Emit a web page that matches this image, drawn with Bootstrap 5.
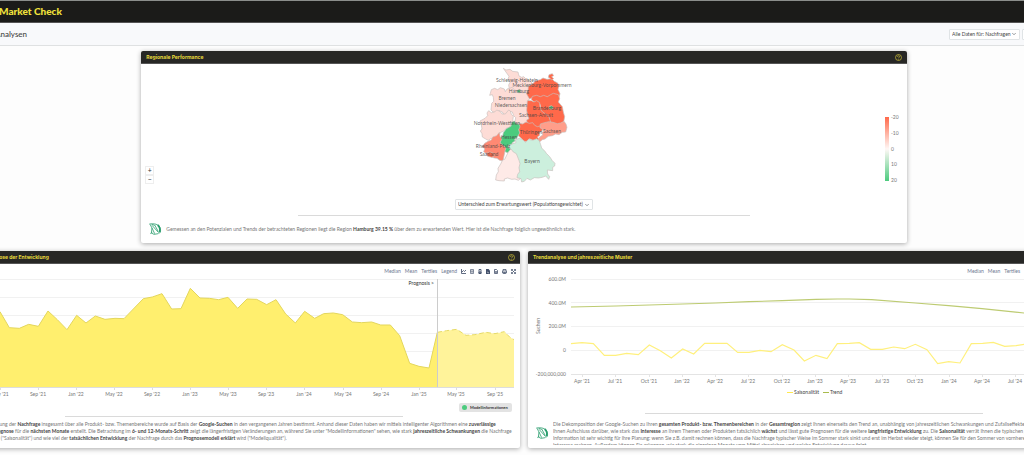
<!DOCTYPE html>
<html lang="de">
<head>
<meta charset="utf-8">
<meta name="viewport" content="width=device-width, initial-scale=1">
<title>Market Check</title>
<link href="https://cdn.jsdelivr.net/npm/bootstrap@5.3.0/dist/css/bootstrap.min.css" rel="stylesheet">
<style>
body{font-family:Lato,"Open Sans",sans-serif;font-size:5px;line-height:7px;color:#777;background:#fdfdfd}
.sheet{margin-left:-52px;margin-right:-76px}
.topbar{background:#1b1b19;border-top:1px solid #8b8e8b;border-bottom:1px solid #555;height:23px;padding-left:51px;box-shadow:0 1px 2px #0004}
.topbar h1{font:900 10px/20px Lato,sans-serif;color:#f1e23c}
.subbar{background:#f8f9fb;height:23px;border-bottom:1px solid #dfe1e2;padding-left:47px;padding-right:24px;gap:2px}
.subbar h2{font:500 8px/20px Lato,sans-serif;color:#444}
.tiny-select{font-size:5px;line-height:7px;color:#444;border:1px solid #e0e4e6;border-radius:1px;padding:1px 7px 1px 2px;background-size:4px 4px;background-position:right 3px center;width:auto;min-height:0}
.filter-a{width:71px}.filter-b{width:54px}.measure{width:138px}
.panel{background:#fff;border-radius:2px;box-shadow:0 1px 5px #0005;overflow:hidden}
.panel-title{background:#272725;border-bottom:1px solid #555;height:13px;padding:0 5px}
.panel-title h3{font:700 5px/12px Inter,sans-serif;color:#e8da3c}
.help{border:0;background:none;padding:0;line-height:0}
.rule{width:59%;height:1px;background:#dadada;margin:0 auto}
.board-row{margin:0 -4px}
.board-row-top{margin-top:1px;margin-bottom:8px}
.mapgrid{display:grid;grid-template-columns:1fr auto 1fr;height:126px}
.zoomer{width:9px;padding-bottom:6px}
.zoomer button{border:1px solid #eee;background:#fff;color:#333;font-size:7px;line-height:7px;height:9px;padding:0}
.picker{padding:9px 0 5px}
.note-top{padding:7px 8px 8px}
.tools{height:14px;padding:0 4px;gap:4px;color:#6e7891}
.tools-b{padding-right:60px}
.tools a{color:inherit;text-decoration:none}
.tools .ico{line-height:0;color:#44516b}
.info{border:0;border-radius:2px;background:#e3e3e3;color:#333;font-size:5px;line-height:9px;padding:0 3px;width:53px;white-space:nowrap;gap:3px}
.info b{font-size:4px}
.dot{width:5px;height:5px;border-radius:50%;background:#4ccb7e;flex:none}
.note b{color:#444}
.note p{white-space:nowrap}
.note-a{padding:4px 0 6px 24px}
.note-b{height:24px;overflow:hidden}
.rule-b{margin-top:17px;margin-bottom:3px}
.chart{overflow:visible}
svg text{font-size:5px;fill:#777}
svg .maplabel{fill:#444;fill-opacity:.85;text-anchor:middle;font-size:5px}
.land path{stroke:#c9c0bd;stroke-width:2;stroke-linejoin:round}
</style>
</head>
<body>
<svg width="0" height="0" class="position-absolute" aria-hidden="true">
<symbol id="q" viewBox="0 0 14 14"><g fill="none" stroke="#d8ca3a" stroke-width="1.3"><circle cx="7" cy="7" r="6"/><path d="M4.8 5.5c.2-2.6 4.6-2.4 4.3.1C9 7 7 7 7 8.5M7 9.8v1.4"/></g></symbol>
<symbol id="leaf" viewBox="0 0 39 36"><g fill="none" stroke="#2a9d6d" stroke-width="2.4"><path d="M1 3C12 2 20 2 26 6c8 5 10 13 8 22l-5 3"/><path d="M26 6c7 6 8 13 6 21" stroke-width="5"/><path d="M3 4l6 11-2 15 8 4 13-2M9 15l8 17M9 7l20 22M17 6l11 20M4 32l6-4M8 4l9 3"/></g></symbol>
</svg>
<div class="overflow-hidden pb-2">
<div class="sheet">
<header class="topbar"><h1 class="m-0">Market Check</h1></header>
<div class="subbar d-flex align-items-center">
<h2 class="m-0 me-auto">Analysen</h2>
<select class="form-select tiny-select filter-a" aria-label="Daten"><option>Alle Daten für: Nachfragen</option></select>
<select class="form-select tiny-select filter-b" aria-label="Region"><option>Alle Regionen</option></select>
</div>
<main class="pt-1">
<div class="row gx-2 board-row board-row-top justify-content-center">
<div class="col-8">
<section class="panel">
<div class="panel-title d-flex align-items-center justify-content-between"><h3 class="m-0">Regionale Performance</h3><button class="help" aria-label="Hilfe"><svg width="7" height="7"><use href="#q"/></svg></button></div>
<div class="mapgrid">
<div class="zoomer d-flex flex-column justify-content-end ms-1"><button aria-label="Vergrößern">+</button><button aria-label="Verkleinern">−</button></div>
<svg width="150" height="126" viewBox="450 64 150 126">
<g class="land" transform="translate(450 60) scale(.33333)">
<path fill="#fddcd6" d="M163 25l8 5 12-2 8 6 16 2 3 12 8 4 6-2 8 8 10 4 8 8-4 12-8 10 4 12-10 7-14-3-10-2-9-7-11-2-7-10-2-12 4-8-6-10 3-8z"/>
<path fill="#fddcd6" d="M127 89l10-4 9 4 8-6 12 4 3 8 5-8 8-2 7-3 8 8 9 3 14 5 12 0 12 14-5 8 0 20-3 9-2 11 6 10-3 12-5 8-10 3-10-3-5 3-9-8 2-12-6-6-4-11-5-2-10 12-10-2-5-8-10-4-8 6-10-2-6-6 2-20 6-6-1-12-3-8-8 2 2-6z"/>
<path fill="#fddcd6" d="M119 152l8 6 10-2 6-6 10 4 6 8 10 0 10-12 5 3 3 10 6 6-2 14-7 18-12 4-8 8-10 5-4 9-8 6-8 4-8-2-8 6-8-4-10-6-1-10-5-8 5-6-2-12-4-12 15-8 8-8-2-8z"/>
<path fill="#ff694a" d="M238 78l12-6 11-10 13-3 8-5 12 4 14-2 8 8 10 5 4 9-3 10 6 13-3 12-14-5-9 5-13-2-9 6-10-2-13 4-13-5-8 2-8-14 4-10z"/><path fill="#ff694a" d="M300 44l10-3 4 6-6 3 6 6-6 4-6-6-4-2z"/>
<path fill="#ff694a" d="M250 109l13-3 11 4 10-4 11 4 10-6 8-4 15 4 4 12-4 10 12 14 3 16 4 14-3 16-11 9-12-1-14-3-8-13-11-11-12-9-2-24-9-8-10 0-8-8z"/>
<path fill="#ff694a" d="M235 122l12 0 8 4 8-4 9 6 1 12 3 11 9 8 14 9 6 18-9 7-12 3-7 8-2 7-8 2-7-9-12-2-5-8-8-2-2-12 7-4-5-15-2-10z"/>
<path fill="#ff694a" d="M211 190l10 2 10-6 10 4 10-2 6 8 8 4 8-2 10 6-4 9-8 5 1 8-7 5 6 7-10 5-10-3-10-4-8 9-9-2-7-8-9-8 2-12-2-12z"/>
<path fill="#ff9e8a" d="M274 192l12-4 14-3 12 2 13 4 10-2 10-5 6 8 3 10-4 14-10 1-10 7-10-2-10 5-12 2-10 8-8 2-10 8-3-8 4-7 10-7-2-8 8-6-8-4-6-4z"/>
<path fill="#4ccb7e" d="M188 187l8-4 5 8 10 2 2 8-4 8 3 10-8 14-7 4 1 6-9 6 3 10-6 5 1 12-12 2-9-4 3-8-6-4-12-8 4-11-2-8 8-7 2-10 9-12 14-7z"/>
<path fill="#ff8973" d="M151 217l2 12 6 8-6 11 12 10 6 6-3 9-6 30-10-2-8-6-8-1-10-4-6-3-8-6-8-6 3-8-6-8 6-9 10-6 10-4 4-9 12-4z"/>
<path fill="#ff694a" d="M112 279l12-3 10 4 2 8-8 4-12-3z"/>
<path fill="#feeae7" d="M178 276l8-10 10 2 6 9 10 4 3 12 5 10-2 8 4 8-8 12-2 12 3 12-7 6-10-4-10 1-12-4-10 3 0 6-16-1-10-2 2-15 6-10-1-10 8-13 6-12 6-2 5-10z"/>
<path fill="#ccefdd" d="M189 252l12-4-2-9 12-4 10 4 8 8 10-9 12 3 12-5 8 6 4 12 3 10 10 10 4 6 10 10 8 12 8 8-1 8-6 4 0 10-16-2 1 12 6 8-3 8-9-10-10 4-12 2-12-1-12 7-10-5-8 9-8 2-2-10-12-3 2-10 6-8-2-12 3-12-3-10-4-10-4-10-9-5-7-9-9-5 2-6z"/>
<path fill="#4ccb7e" d="M204 92l6-4 5 5-3 6-7-2zM300 140l7-3 6 5-4 6-8-2z"/>
</g>
<g><text class="maplabel" x="518" y="82">Schleswig-Holstein</text><text class="maplabel" x="543" y="87">Mecklenburg-Vorpommern</text><text class="maplabel" x="520" y="93">Hamburg</text><text class="maplabel" x="508" y="100">Bremen</text><text class="maplabel" x="512" y="107">Niedersachsen</text><text class="maplabel" x="548" y="110">Brandenburg</text><text class="maplabel" x="537" y="117">Sachsen-Anhalt</text><text class="maplabel" x="498" y="125">Nordrhein-Westfalen</text><text class="maplabel" x="532" y="134">Thüringen</text><text class="maplabel" x="553" y="133">Sachsen</text><text class="maplabel" x="510" y="139">Hessen</text><text class="maplabel" x="494" y="148">Rheinland-Pfalz</text><text class="maplabel" x="490" y="156">Saarland</text><text class="maplabel" x="533" y="163">Bayern</text></g>
</svg>
<svg class="ms-auto" width="23" height="126" viewBox="884 64 23 126"><defs><linearGradient id="scale" x2="0" y2="1"><stop stop-color="#ff694a"/><stop offset=".5" stop-color="#fff8f6"/><stop offset="1" stop-color="#4ccb7e"/></linearGradient></defs><path fill="url(#scale)" d="M885 117h4v64h-4z"/><text x="891" y="119">-20</text><text x="891" y="135">-10</text><text x="891" y="151">0</text><text x="891" y="166">10</text><text x="891" y="182">20</text></svg>
</div>
<div class="picker d-flex justify-content-center"><select class="form-select tiny-select measure" aria-label="Kennzahl"><option>Unterschied zum Erwartungswert (Populationsgewichtet)</option></select></div>
<div class="rule"></div>
<div class="note note-top d-flex align-items-center"><svg width="13" height="12"><use href="#leaf"/></svg><p class="m-0 ms-1">Gemessen an den Potenzialen und Trends der betrachteten Regionen liegt die Region <b>Hamburg 39.15 %</b> über dem zu erwartenden Wert. Hier ist die Nachfrage folglich ungewöhnlich stark.</p></div>
</section>
</div>
</div>
<div class="row gx-2 board-row">
<div class="col-6">
<section class="panel h-100">
<div class="panel-title d-flex align-items-center justify-content-between"><h3 class="m-0">Analyse und Prognose der Entwicklung</h3><button class="help" aria-label="Hilfe"><svg width="7" height="7"><use href="#q"/></svg></button></div>
<div class="tools d-flex align-items-center justify-content-end"><a href="#">Median</a><a href="#">Mean</a><a href="#">Tertiles</a><a href="#">Legend</a>
<a href="#" class="ico" aria-label="Linie"><svg width="5" height="5" viewBox="0 0 10 10"><path d="M1 0v9h9M2 6l3-3 2 2 3-3" fill="none" stroke="currentColor" stroke-width="1.7"/></svg></a>
<a href="#" class="ico" aria-label="Tabelle"><svg width="4" height="5" viewBox="0 0 8 10"><path d="M1 1h6v8H1zM1 4h6M2 6h4" fill="none" stroke="currentColor" stroke-width="1.3"/></svg></a>
<a href="#" class="ico" aria-label="Bild"><svg width="4" height="5" viewBox="0 0 8 10"><path d="M2 1h4v8H2zM2 6h4v3H2z" fill="none" stroke="currentColor" stroke-width="1.8"/></svg></a>
<a href="#" class="ico" aria-label="Excel"><svg width="4" height="5" viewBox="0 0 8 10"><path d="M0 0h5l3 3v7H0z" fill="currentColor"/><path d="M2 6l4 2" stroke="#fff"/></svg></a>
<a href="#" class="ico" aria-label="CSV"><svg width="4" height="5" viewBox="0 0 8 10"><path d="M1 1h4l2 2v6H1zM3 5h2v2H3z" fill="none" stroke="currentColor" stroke-width="1.6"/></svg></a>
<a href="#" class="ico" aria-label="Drucken"><svg width="5" height="5" viewBox="0 0 10 10"><path d="M2 4V1h6v3M1 4h8v4H1zM3 7h4v2H3z" fill="none" stroke="currentColor" stroke-width="1.5"/></svg></a>
<a href="#" class="ico" aria-label="Vollbild"><svg width="5" height="5" viewBox="0 0 10 10"><path d="M1 4V1h3M6 1h3v3M9 6v3H6M4 9H1V6M1 1l8 8M9 1L1 9" fill="none" stroke="currentColor" stroke-width="1.4"/></svg></a></div>
<svg class="chart w-100 d-block" viewBox="-52 278 572 125">
<path d="M-40 279.500H514M-40 297.500H514M-40 315.500H514M-40 333.500H514M-40 351.500H514M-40 369.500H514" stroke="#f1f1f1"/>
<g transform="translate(0 245) scale(.33333)">
<path fill="#ffef6e" d="M-120 426V180L-60 190 0 200 28 248 58 250 86 238 115 244 144 198 172 224 201 254 230 211 258 234 286 213 315 223 345 220 372 221 430 161 457 156 486 146 515 192 543 191 571 130 600 159 628 160 656 164 684 157 713 190 741 162 770 163 800 179 828 164 857 207 886 234 914 199 944 220 971 206 1000 204 1028 209 1057 231 1085 233 1115 231 1142 240 1171 240 1199 272 1229 355 1257 364 1287 369 1312 262V426z"/>
<path fill="#fff39a" d="M1312 426V262L1340 257 1370 253 1398 271 1425 269 1457 262 1485 266 1513 260 1530 277 1542 284V426z"/>
<path fill="none" stroke="#e3d65c" stroke-width="3" d="M-120 180L-60 190 0 200 28 248 58 250 86 238 115 244 144 198 172 224 201 254 230 211 258 234 286 213 315 223 345 220 372 221 430 161 457 156 486 146 515 192 543 191 571 130 600 159 628 160 656 164 684 157 713 190 741 162 770 163 800 179 828 164 857 207 886 234 914 199 944 220 971 206 1000 204 1028 209 1057 231 1085 233 1115 231 1142 240 1171 240 1199 272 1229 355 1257 364 1287 369 1312 262"/>
<path fill="none" stroke="#e6da66" stroke-width="3" stroke-dasharray="14 8" d="M1312 262L1340 257 1370 253 1398 271 1425 269 1457 262 1485 266 1513 260 1530 277 1542 284"/>
</g>
<path d="M437.500 279v108" stroke="#ccc"/><path d="M-40 387.500H514M.5 387v3M38.500 387v3M76.500 387v3M114.500 387v3M152.500 387v3M190.500 387v3M228.500 387v3M266.500 387v3M304.500 387v3M343.500 387v3M381.500 387v3M419.500 387v3M456.500 387v3M495.500 387v3" stroke="#ddd"/>
<text x="434" y="285" text-anchor="end" style="fill:#333">Prognosis &gt;</text>
<g text-anchor="middle"><text x="0" y="396">May '21</text><text x="38" y="396">Sep '21</text><text x="76" y="396">Jan '22</text><text x="114" y="396">May '22</text><text x="152" y="396">Sep '22</text><text x="190" y="396">Jan '23</text><text x="228" y="396">May '23</text><text x="266" y="396">Sep '23</text><text x="304" y="396">Jan '24</text><text x="343" y="396">May '24</text><text x="381" y="396">Sep '24</text><text x="419" y="396">Jan '25</text><text x="456" y="396">May '25</text><text x="495" y="396">Sep '25</text></g>
</svg>
<div class="d-flex justify-content-end px-2"><button class="info d-flex align-items-center"><span class="dot"></span><b>Modellinformationen</b></button></div>
<div class="rule mt-1"></div>
<div class="note note-a"><p class="m-0">Die Entwicklung der <b>Nachfrage</b> insgesamt über alle Produkt- bzw. Themenbereiche wurde auf Basis der <b>Google-Suchen</b> in den vergangenen Jahren bestimmt. Anhand dieser Daten haben wir mittels intelligenter Algorithmen eine <b>zuverlässige</b><br><b>und gute Prognose</b> für die <b>nächsten Monate</b> erstellt. Die Betrachtung im <b>6- und 12-Monats-Schritt</b> zeigt die längerfristigen Veränderungen an, während Sie unter "Modellinformationen" sehen, wie stark <b>jahreszeitliche Schwankungen</b> die Nachfrage<br>beeinflussen ("Saisonalität") und wie viel der <b>tatsächlichen Entwicklung</b> der Nachfrage durch das <b>Prognosemodell erklärt</b> wird ("Modellqualität").</p></div>
</section>
</div>
<div class="col-6">
<section class="panel h-100">
<div class="panel-title d-flex align-items-center justify-content-between"><h3 class="m-0">Trendanalyse und jahreszeitliche Muster</h3><button class="help" aria-label="Hilfe"><svg width="7" height="7"><use href="#q"/></svg></button></div>
<div class="tools tools-b d-flex align-items-center justify-content-end"><a href="#">Median</a><a href="#">Mean</a><a href="#">Tertiles</a><a href="#">Legend</a></div>
<svg class="chart w-100 d-block" viewBox="528 278 572 118">
<path d="M571 279.500H1094M571 302.500H1094M571 326.500H1094M571 350.500H1094" stroke="#f1f1f1"/>
<path d="M571 374.500H1094M582.500 374v3M615.500 374v3M649.500 374v3M682.500 374v3M715.500 374v3M748.500 374v3M782.500 374v3M815.500 374v3M848.500 374v3M882.500 374v3M915.500 374v3M949.500 374v3M982.500 374v3M1015.500 374v3" stroke="#e4e4e4"/>
<g transform="translate(520 245) scale(.33333)" fill="none" stroke-width="3.500">
<path stroke="#fff07d" d="M153 296L186 293 220 296 253 331 287 331 320 325 355 329 388 300 421 317 454 339 488 312 521 327 554 295 587 295 621 295 653 322 687 322 720 316 753 320 787 299 822 315 853 348 888 331 921 341 952 296 988 295 1018 293 1052 313 1087 313 1121 306 1154 311 1186 298 1221 314 1253 356 1286 350 1320 354 1354 296 1388 295 1420 292 1454 304 1488 302 1512 298 1560 300"/>
<path stroke="#bdcb72" d="M153 186L288 183 388 180 488 177 587 174 687 170 787 167 888 163 952 162 988 162 1055 164 1186 174 1286 182 1386 191 1512 204 1580 211"/></g>
<g text-anchor="end"><text x="566" y="281">600.0M</text><text x="566" y="305">400.0M</text><text x="566" y="328">200.0M</text><text x="566" y="352">0</text><text x="566" y="376">-200,000,000</text></g>
<text transform="translate(540 326) rotate(-90)" text-anchor="middle">Suchen</text>
<g text-anchor="middle"><text x="582" y="383">Apr '21</text><text x="615" y="383">Jul '21</text><text x="649" y="383">Oct '21</text><text x="682" y="383">Jan '22</text><text x="715" y="383">Apr '22</text><text x="748" y="383">Jul '22</text><text x="782" y="383">Oct '22</text><text x="815" y="383">Jan '23</text><text x="848" y="383">Apr '23</text><text x="882" y="383">Jul '23</text><text x="915" y="383">Oct '23</text><text x="949" y="383">Jan '24</text><text x="982" y="383">Apr '24</text><text x="1015" y="383">Jul '24</text></g>
<path d="M787 392.500h6" stroke="#ffe94f"/><path d="M823 392.500h6" stroke="#a9bb4c"/><text x="794" y="394" style="fill:#444">Saisonalität</text><text x="830" y="394" style="fill:#444">Trend</text>
</svg>
<div class="rule rule-b"></div>
<div class="note d-flex align-items-center px-2 pt-1"><svg class="flex-shrink-0" width="13" height="12"><use href="#leaf"/></svg><div class="note-b ms-1"><p class="m-0">Die Dekomposition der Google-Suchen zu Ihren <b>gesamten Produkt- bzw. Themenbereichen</b> in der <b>Gesamtregion</b> zeigt Ihnen einerseits den Trend an, unabhängig von jahreszeitlichen Schwankungen und Zufallseffekten. Dieser gibt<br>Ihnen Aufschluss darüber, wie stark das <b>Interesse</b> an Ihrem Themen oder Produkten tatsächlich <b>wächst</b> und lässt gute Prognosen für die weitere <b>langfristige Entwicklung</b> zu. Die <b>Saisonalität</b> verrät Ihnen die typischen <b>jahreszeitlichen</b><br>Information ist sehr wichtig für Ihre Planung: wenn Sie z.B. damit rechnen können, dass die Nachfrage typischer Weise im Sommer stark sinkt und erst im Herbst wieder steigt, können Sie für den Sommer von vornherein mit weniger<br>Interesse rechnen. Außerdem können Sie erkennen, wie stark die einzelnen Monate vom Mittel abweichen und welche Entwicklung daraus folgt.</p></div></div>
</section>
</div>
</div>
</main>
</div>
</div>
<script src="https://cdn.jsdelivr.net/npm/bootstrap@5.3.0/dist/js/bootstrap.bundle.min.js"></script>
</body>
</html>
